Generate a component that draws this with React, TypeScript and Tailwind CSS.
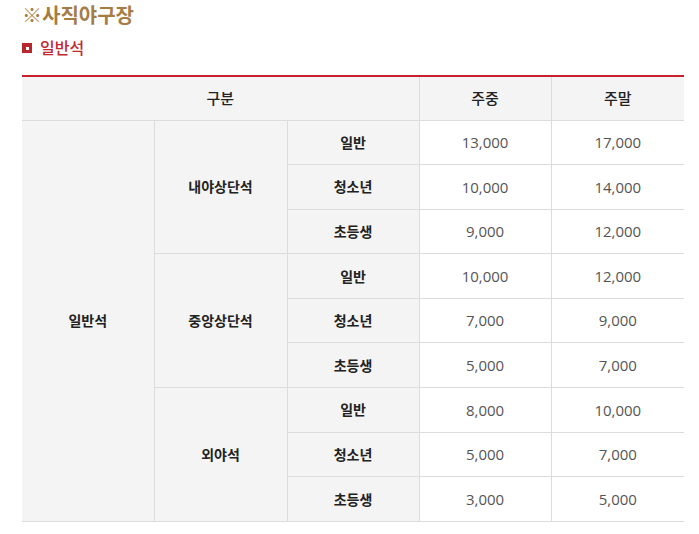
import React from 'react';

const font = { fontFamily: '"Open Sans", "Noto Sans CJK KR", sans-serif' };

interface PriceRow {
  type: string;
  weekday: string;
  weekend: string;
}

interface Zone {
  name: string;
  rows: PriceRow[];
}

const zones: Zone[] = [
  {
    name: '내야상단석',
    rows: [
      { type: '일반', weekday: '13,000', weekend: '17,000' },
      { type: '청소년', weekday: '10,000', weekend: '14,000' },
      { type: '초등생', weekday: '9,000', weekend: '12,000' },
    ],
  },
  {
    name: '중앙상단석',
    rows: [
      { type: '일반', weekday: '10,000', weekend: '12,000' },
      { type: '청소년', weekday: '7,000', weekend: '9,000' },
      { type: '초등생', weekday: '5,000', weekend: '7,000' },
    ],
  },
  {
    name: '외야석',
    rows: [
      { type: '일반', weekday: '8,000', weekend: '10,000' },
      { type: '청소년', weekday: '5,000', weekend: '7,000' },
      { type: '초등생', weekday: '3,000', weekend: '5,000' },
    ],
  },
];

const labelCell = 'border border-[#dcdcdc] bg-[#f4f4f4] text-center text-[14px] font-semibold text-[#222]';
const valueCell = 'border border-[#dcdcdc] bg-white text-center text-[15px] text-[#555]';

export default function App() {
  return (
    <div className="min-h-[534px] w-[699px] bg-white pl-[22px] pr-[15px] pt-[3px]" style={font}>
      {/* Title */}
      <h2 className="text-[20px] font-bold leading-[26px] text-[#a67c45]">※사직야구장</h2>

      {/* Sub title */}
      <div className="mt-[9px] flex items-center gap-[8px]">
        <span className="flex h-[10px] w-[10px] items-center justify-center bg-[#b8272c]">
          <span className="h-[3px] w-[3px] bg-white" />
        </span>
        <span className="text-[16px] font-medium leading-[20px] text-[#c1272d]">일반석</span>
      </div>

      {/* Price table */}
      <table className="mt-[17px] w-[662px] table-fixed border-collapse border-t-2 border-t-[#c8202d]">
        <colgroup>
          <col className="w-[132px]" />
          <col className="w-[133px]" />
          <col className="w-[132px]" />
          <col className="w-[132px]" />
          <col className="w-[133px]" />
        </colgroup>
        <thead>
          <tr className="h-[44px]">
            <th colSpan={3} className="border-b border-r border-[#dcdcdc] bg-[#f4f4f4] text-center text-[15px] font-medium text-[#222]">
              구분
            </th>
            <th className="border-b border-r border-[#dcdcdc] bg-[#f4f4f4] text-center text-[15px] font-medium text-[#222]">
              주중
            </th>
            <th className="border-b border-[#dcdcdc] bg-[#f4f4f4] text-center text-[15px] font-medium text-[#222]">
              주말
            </th>
          </tr>
        </thead>
        <tbody>
          {zones.map((zone, zi) =>
            zone.rows.map((row, ri) => (
              <tr key={zone.name + row.type} className="h-[44.6px]">
                {zi === 0 && ri === 0 && (
                  <td rowSpan={9} className={`${labelCell} border-l-0`}>
                    일반석
                  </td>
                )}
                {ri === 0 && (
                  <td rowSpan={3} className={labelCell}>
                    {zone.name}
                  </td>
                )}
                <td className={labelCell}>{row.type}</td>
                <td className={valueCell}>{row.weekday}</td>
                <td className={`${valueCell} border-r-0`}>{row.weekend}</td>
              </tr>
            ))
          )}
        </tbody>
      </table>
    </div>
  );
}
